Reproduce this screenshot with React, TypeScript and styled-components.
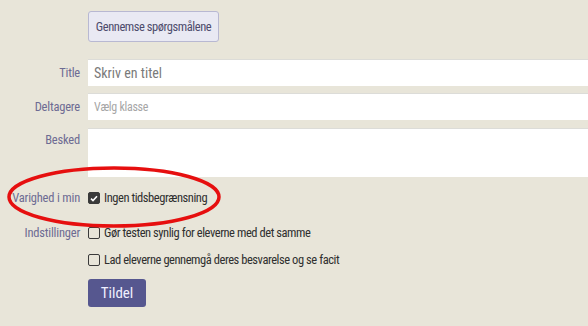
import React from "react";
import styled, { createGlobalStyle } from "styled-components";

const Global = createGlobalStyle`
  html, body { margin: 0; padding: 0; background: #e8e5d9; }
  body {
    font-family: "Roboto Condensed", "Open Sans Condensed", "DejaVu Sans Condensed", Roboto, sans-serif;
    font-stretch: 80%;
    overflow: hidden;
  }
`;

const Page = styled.div`
  position: relative;
  width: 588px;
  height: 326px;
  overflow: hidden;
  background: #e8e5d9;
  padding-top: 11px;
  box-sizing: border-box;
`;

const Form = styled.div`
  display: grid;
  grid-template-columns: 80px 520px;
  column-gap: 8px;
  align-items: center;
`;

const Row = styled.div<{ $mt: number }>`
  display: contents;
  & > * { margin-top: ${(p) => p.$mt}px; }
`;

const Label = styled.label<{ $top?: boolean }>`
  justify-self: end;
  align-self: ${(p) => (p.$top ? "start" : "center")};
  padding-top: ${(p) => (p.$top ? "5px" : "0")};
  font-size: 12.5px;
  line-height: 14px;
  letter-spacing: -0.2px;
  color: #6d6b93;
  white-space: nowrap;
`;

const Empty = styled.div``;

const GhostButton = styled.button`
  justify-self: start;
  height: 31px;
  width: 131px;
  padding: 0;
  border: 1px solid #b8b8d2;
  border-radius: 3px;
  background: #e9e9f3;
  color: #4d4c6c;
  font-family: inherit;
  font-stretch: inherit;
  font-size: 12.5px;
  letter-spacing: -0.45px;
  white-space: nowrap;
  text-align: center;
`;

const TextInput = styled.input<{ $small?: boolean }>`
  box-sizing: border-box;
  width: 520px;
  height: 27px;
  border: none;
  border-top: 1px solid #dcdcd8;
  background: #fff;
  padding: 0 6px;
  font-family: inherit;
  font-stretch: ${(p) => (p.$small ? "inherit" : "normal")};
  font-size: ${(p) => (p.$small ? "12px" : "14px")};
  letter-spacing: ${(p) => (p.$small ? "-0.3px" : "0")};
  outline: none;
  &::placeholder { color: ${(p) => (p.$small ? "#a6a6a6" : "#7a7a7a")}; }
`;

const TextArea = styled.textarea`
  box-sizing: border-box;
  width: 520px;
  height: 49px;
  border: none;
  border-top: 1px solid #dcdcd8;
  background: #fff;
  resize: none;
  display: block;
`;

const CheckRow = styled.label`
  display: flex;
  align-items: center;
  gap: 4px;
  font-size: 12.5px;
  line-height: 14px;
  letter-spacing: -0.45px;
  color: #2f2f2f;
  white-space: nowrap;
`;

const Box = styled.span<{ $checked?: boolean }>`
  box-sizing: border-box;
  width: 12px;
  height: 12px;
  border-radius: 2px;
  border: 1.5px solid #3a3a3a;
  background: ${(p) => (p.$checked ? "#3a3a3a" : "transparent")};
  display: flex;
  align-items: center;
  justify-content: center;
`;

const PrimaryButton = styled.button`
  justify-self: start;
  width: 58px;
  height: 28px;
  padding: 0;
  border: none;
  border-radius: 3px;
  background: #56578f;
  color: #f0f0ff;
  font-family: inherit;
  font-stretch: inherit;
  font-size: 15px;
`;

const Ellipse = styled.svg`
  position: absolute;
  left: 6px;
  top: 165px;
  pointer-events: none;
`;

const Check = () => (
  <svg width="8" height="7" viewBox="0 0 8 7">
    <path d="M1 3.6 L3 5.5 L7 1.2" fill="none" stroke="#fff" strokeWidth="1.6" />
  </svg>
);

export default function App() {
  return (
    <Page>
      <Global />
      <Form>
        <Row $mt={0}>
          <Empty />
          <GhostButton>Gennemse spørgsmålene</GhostButton>
        </Row>
        <Row $mt={17}>
          <Label>Title</Label>
          <TextInput placeholder="Skriv en titel" />
        </Row>
        <Row $mt={7}>
          <Label>Deltagere</Label>
          <TextInput $small placeholder="Vælg klasse" />
        </Row>
        <Row $mt={8}>
          <Label $top>Besked</Label>
          <TextArea />
        </Row>
        <Row $mt={14}>
          <Label>Varighed i min</Label>
          <CheckRow>
            <Box $checked><Check /></Box>
            Ingen tidsbegrænsning
          </CheckRow>
        </Row>
        <Row $mt={21}>
          <Label>Indstillinger</Label>
          <CheckRow>
            <Box />
            Gør testen synlig for eleverne med det samme
          </CheckRow>
        </Row>
        <Row $mt={13}>
          <Empty />
          <CheckRow>
            <Box />
            Lad eleverne gennemgå deres besvarelse og se facit
          </CheckRow>
        </Row>
        <Row $mt={12}>
          <Empty />
          <PrimaryButton>Tildel</PrimaryButton>
        </Row>
      </Form>
      <Ellipse width="216" height="64" viewBox="0 0 216 64">
        <ellipse cx="108" cy="32" rx="105" ry="29" fill="none" stroke="#e60f0f" strokeWidth="3.5" />
      </Ellipse>
    </Page>
  );
}
